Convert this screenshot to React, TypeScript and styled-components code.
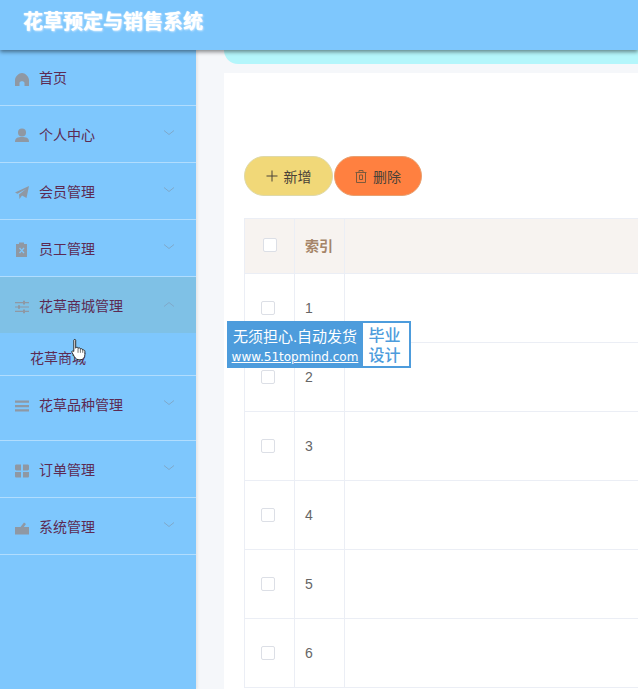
import React from "react";
import styled, { createGlobalStyle } from "styled-components";

const GlobalStyle = createGlobalStyle`
  html, body {
    margin: 0;
    padding: 0;
    height: 100%;
    overflow: hidden;
    font-family: "Liberation Sans", "Noto Sans CJK SC", sans-serif;
  }
`;

const icons: Record<string, React.ReactNode> = {
  home: <path d="M8 2 C11 2 15 5.5 15 9 V15 H10.5 V12 C10.5 9.5 5.5 9.5 5.5 12 V15 H1 V9 C1 5.5 5 2 8 2 Z" />,
  user: (
    <>
      <circle cx="8" cy="4.5" r="4" />
      <path d="M1 14 C1 9.5 4 9 8 9 C12 9 15 9.5 15 14 Z" />
    </>
  ),
  plane: <path d="M15 1 L12.5 13 L8 10.5 L5.5 14 L5 9.5 L12 4 L3.5 8.7 L1 7.5 Z" />,
  clipboard: (
    <path
      fillRule="evenodd"
      d="M5 0.5 H10 V2 H13 V15 H2 V2 H5 Z M5 6.5 L7 8.5 L5 10.5 L6 11.5 L7.7 9.5 L9.5 11.5 L10.5 10.5 L8.5 8.5 L10.5 6.5 L9.5 5.5 L7.7 7.5 L6 5.5 Z"
    />
  ),
  sliders: (
    <path d="M1 3 H9 V1.8 H11 V3 H15 V4.2 H11 V5.4 H9 V4.2 H1 Z M1 7.4 H4 V6.2 H6 V7.4 H15 V8.6 H6 V9.8 H4 V8.6 H1 Z M1 11.8 H9 V10.6 H11 V11.8 H15 V13 H11 V14.2 H9 V13 H1 Z" />
  ),
  lines: <path d="M1 2.5 H15 V4.8 H1 Z M1 6.9 H15 V9.2 H1 Z M1 11.2 H15 V13.5 H1 Z" />,
  grid: (
    <path d="M2.5 1.5 H7 V7.4 H2.5 C1.5 7.4 1 6.9 1 6 V3 C1 2 1.5 1.5 2.5 1.5 Z M9 1.5 H13.5 C14.5 1.5 15 2 15 3 V6 C15 6.9 14.5 7.4 13.5 7.4 H9 Z M1 9 H7 V14.5 H2.5 C1.5 14.5 1 14 1 13 Z M9 9 H15 V13 C15 14 14.5 14.5 13.5 14.5 H9 Z" />
  ),
  case: <path d="M1 7 H6.5 L10 2.5 L12 4 L9.8 7 H15 V14.5 H1 Z" />,
};

function MenuIcon({ name }: { name: string }) {
  return (
    <IconSvg viewBox="0 0 16 16" fill="currentColor">
      {icons[name]}
    </IconSvg>
  );
}

function Arrow({ open }: { open?: boolean }) {
  return (
    <ArrowSvg viewBox="0 0 12 12" fill="none" stroke="currentColor" strokeWidth="1" $open={open}>
      <path d="M1 3.5 L6 7.5 L11 3.5" />
    </ArrowSvg>
  );
}

const menu = [
  { label: "首页", icon: "home", arrow: false },
  { label: "个人中心", icon: "user", arrow: true },
  { label: "会员管理", icon: "plane", arrow: true },
  { label: "员工管理", icon: "clipboard", arrow: true },
  { label: "花草商城管理", icon: "sliders", arrow: true, open: true, child: "花草商城" },
  { label: "花草品种管理", icon: "lines", arrow: true, extra: true },
  { label: "订单管理", icon: "grid", arrow: true },
  { label: "系统管理", icon: "case", arrow: true },
];

const rows = [1, 2, 3, 4, 5, 6];

function App() {
  return (
    <Page>
      <GlobalStyle />
      <Header>
        <Title>花草预定与销售系统</Title>
      </Header>
      <Body>
        <Sidebar>
          {menu.map((item, i) => (
            <MenuGroup key={item.label} $extra={item.extra}>
              <MenuRow $open={item.open} $first={i === 0}>
                <MenuIcon name={item.icon} />
                <MenuLabel $first={i === 0}>{item.label}</MenuLabel>
                {item.arrow && <Arrow open={item.open} />}
              </MenuRow>
              {item.child && <SubItem>{item.child}</SubItem>}
            </MenuGroup>
          ))}
        </Sidebar>
        <Main>
          <Banner />
          <Card>
            <Actions>
              <ActionButton $bg="#f1d878" $border="#dfd9a8" $width={89}>
                <svg width="12" height="12" viewBox="0 0 12 12" stroke="currentColor" fill="none">
                  <path d="M6 0.5 V11.5 M0.5 6 H11.5" />
                </svg>
                新增
              </ActionButton>
              <ActionButton $bg="#ff8040" $border="#e8a070" $width={88}>
                <svg width="12" height="13" viewBox="0 0 12 13" stroke="#7d5a3c" fill="none">
                  <path d="M0.5 2.5 H11.5 M4 2.5 V0.5 H8 V2.5 M1.5 2.5 V12.5 H10.5 V2.5 M4.5 5 V9.5 H7.5 V5 Z" />
                </svg>
                删除
              </ActionButton>
            </Actions>
            <Table>
              <thead>
                <tr>
                  <HeadCell $width={50}>
                    <Check $shift={2} />
                  </HeadCell>
                  <HeadCell $width={50}>索引</HeadCell>
                  <HeadCell />
                </tr>
              </thead>
              <tbody>
                {rows.map((n) => (
                  <tr key={n}>
                    <Cell>
                      <Check />
                    </Cell>
                    <Cell>{n}</Cell>
                    <Cell />
                  </tr>
                ))}
              </tbody>
            </Table>
          </Card>
        </Main>
      </Body>
      <Watermark>
        <WatermarkText>
          <WatermarkSlogan>无须担心.自动发货</WatermarkSlogan>
          <WatermarkUrl>www.51topmind.com</WatermarkUrl>
        </WatermarkText>
        <WatermarkBadge>
          毕业
          <br />
          设计
        </WatermarkBadge>
      </Watermark>
      <Cursor viewBox="0 0 16 24">
        <path
          d="M3 1.5 C3 0.5 5 0.5 5 1.5 V10 C6 8.5 7.5 9 7.5 10.2 C8.5 9.3 10 9.6 10 11 C11 10.2 12.5 10.8 12.5 12 C13.5 11.5 14.8 12.2 14.8 13.5 V17 C14.8 20 13 22.5 9.5 22.5 C6.5 22.5 5 21.5 3.5 19 L1 14.5 C0.5 13 2 12.5 3 13.5 Z"
          fill="#fff"
          stroke="#222"
          strokeWidth="1"
        />
        <path d="M7.5 10.2 V15 M10 11 V15 M12.5 12 V15" stroke="#444" strokeWidth="0.8" />
      </Cursor>
    </Page>
  );
}

const Page = styled.div`
  position: relative;
  width: 638px;
  height: 689px;
  overflow: hidden;
  display: flex;
  flex-direction: column;
  background: #f5f7fa;
`;

const Header = styled.header`
  position: relative;
  z-index: 2;
  flex: 0 0 50px;
  display: flex;
  align-items: center;
  padding-left: 23px;
  box-sizing: border-box;
  background: #7ec7fd;
  box-shadow: 0 2px 4px rgba(0, 0, 0, 0.45);
`;

const Title = styled.h1`
  margin: 0 0 6px;
  font-size: 20px;
  line-height: 28px;
  font-weight: 700;
  color: #fff;
  text-shadow: 0 0 1px #fff, 1px 1px 2px rgba(255, 255, 255, 0.6);
`;

const Body = styled.div`
  flex: 1;
  display: flex;
  min-height: 0;
`;

const Sidebar = styled.nav`
  flex: 0 0 196px;
  background: #7ec7fd;
  box-shadow: 1px 0 3px rgba(120, 120, 120, 0.2);
`;

const MenuGroup = styled.div<{ $extra?: boolean }>`
  border-bottom: 1px solid rgba(255, 255, 255, 0.4);
  padding-bottom: ${(p) => (p.$extra ? "8px" : "0")};
`;

const MenuRow = styled.div<{ $open?: boolean; $first?: boolean }>`
  display: flex;
  align-items: center;
  height: ${(p) => (p.$first ? "55px" : "56px")};
  padding-left: 14px;
  padding-right: 21px;
  box-sizing: border-box;
  background: ${(p) => (p.$open ? "#7fc1e6" : "transparent")};
`;

const IconSvg = styled.svg`
  width: 16px;
  height: 16px;
  flex: none;
  margin: 3px 9px 0 0;
  color: #8f98a3;
`;

const MenuLabel = styled.span<{ $first?: boolean }>`
  flex: 1;
  font-size: 14px;
  color: #5c2a52;
  margin-bottom: ${(p) => (p.$first ? "2px" : "0")};
`;

const ArrowSvg = styled.svg<{ $open?: boolean }>`
  width: 12px;
  height: 12px;
  margin-bottom: 3px;
  color: #7fa9ca;
  transform: ${(p) => (p.$open ? "rotate(180deg)" : "none")};
`;

const SubItem = styled.div`
  height: 42px;
  padding-left: 30px;
  padding-top: 16px;
  box-sizing: border-box;
  font-size: 14px;
  line-height: 18px;
  color: #5c2a52;
`;

const Main = styled.main`
  flex: 1;
  min-width: 0;
  padding-left: 28px;
  overflow: hidden;
`;

const Banner = styled.div`
  height: 14px;
  background: #b4f6fb;
  border-bottom-left-radius: 20px;
`;

const Card = styled.section`
  margin-top: 9px;
  padding: 83px 0 0 20px;
  width: 700px;
  height: 700px;
  box-sizing: border-box;
  background: #fff;
`;

const Actions = styled.div`
  display: flex;
  gap: 1px;
  margin-bottom: 22px;
`;

const ActionButton = styled.button<{ $bg: string; $border: string; $width: number }>`
  display: flex;
  align-items: center;
  justify-content: center;
  gap: 6px;
  width: ${(p) => p.$width}px;
  height: 40px;
  padding: 0;
  border: 1px solid ${(p) => p.$border};
  border-radius: 20px;
  background: ${(p) => p.$bg};
  color: #4a4238;
  font-family: inherit;
  font-size: 14px;
`;

const Table = styled.table`
  width: 100%;
  border-collapse: collapse;
  table-layout: fixed;
`;

const HeadCell = styled.th<{ $width?: number }>`
  width: ${(p) => (p.$width ? `${p.$width}px` : "auto")};
  height: 55px;
  padding: 0 0 2px 10px;
  box-sizing: border-box;
  text-align: left;
  font-size: 14px;
  font-weight: 700;
  color: #a58468;
  background: #f7f3f0;
  border: 1px solid #ebeef5;
`;

const Cell = styled.td`
  height: 69px;
  padding: 0 0 0 10px;
  box-sizing: border-box;
  font-size: 14px;
  color: #666;
  border: 1px solid #ebeef5;
`;

const Check = styled.span<{ $shift?: number }>`
  display: block;
  width: 14px;
  height: 14px;
  margin-left: ${(p) => (p.$shift ? `${p.$shift + 6}px` : "6px")};
  background: #fff;
  border: 1px solid #dcdfe6;
  border-radius: 2px;
  box-sizing: border-box;
`;

const Watermark = styled.div`
  position: absolute;
  left: 227px;
  top: 321px;
  z-index: 3;
  width: 184px;
  height: 47px;
  display: flex;
  box-sizing: border-box;
  border: 2px solid #4d9cdc;
  border-left-width: 0;
  background: #4d9cdc;
`;

const WatermarkText = styled.div`
  flex: 1;
  padding-top: 2px;
  color: #fff;
  text-align: center;
  white-space: nowrap;
`;

const WatermarkSlogan = styled.div`
  font-size: 15px;
  line-height: 24px;
`;

const WatermarkUrl = styled.div`
  font-family: "DejaVu Sans", sans-serif;
  font-size: 12px;
  line-height: 17px;
  text-decoration: underline;
`;

const WatermarkBadge = styled.div`
  flex: 0 0 46px;
  padding: 3px 3px 0 0;
  background: #fff;
  color: #4d9cdc;
  text-align: center;
  font-size: 16px;
  font-weight: 500;
  line-height: 20px;
  box-sizing: border-box;
`;

const Cursor = styled.svg`
  position: absolute;
  left: 71px;
  top: 338px;
  z-index: 3;
  width: 15px;
  height: 24px;
`;

export default App;
